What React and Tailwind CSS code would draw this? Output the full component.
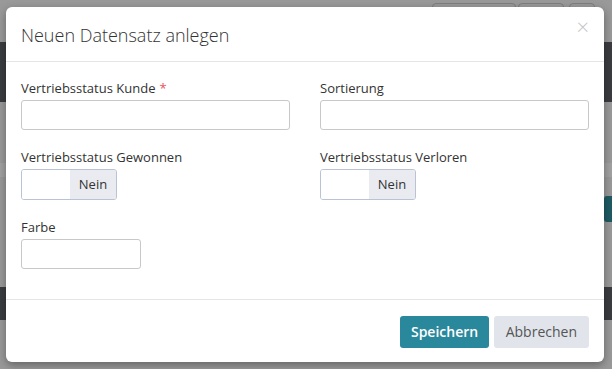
import { useState } from "react";

const font = { fontFamily: '"Open Sans", "Liberation Sans", sans-serif' };

function Field({ label, required, className = "w-full" }) {
  return (
    <div className="flex flex-col">
      <label className="text-[13px] leading-[18px] text-[#333] mb-[3px]">
        {label}
        {required && <span className="text-[#e8525c] ml-1">*</span>}
      </label>
      <input
        type="text"
        className={`h-[30px] rounded-[3px] border border-[#c8c8c8] bg-white outline-none ${className}`}
      />
    </div>
  );
}

function Toggle({ label }) {
  const [on, setOn] = useState(false);
  return (
    <div className="flex flex-col">
      <label className="text-[13px] leading-[18px] text-[#333] mb-[3px]">{label}</label>
      <button
        type="button"
        onClick={() => setOn(!on)}
        className="flex h-[31px] w-[96px] rounded-[3px] border border-[#b9c3d3] overflow-hidden bg-white"
      >
        <span className="w-[48px] h-full bg-white" />
        <span className="flex-1 h-full bg-[#e9ebf0] flex items-center justify-center text-[13px] text-[#333]">
          {on ? "Ja" : "Nein"}
        </span>
      </button>
    </div>
  );
}

export default function App() {
  return (
    <div className="relative w-[612px] h-[369px] overflow-hidden bg-[#999]" style={font}>
      {/* page behind the overlay */}
      <div className="flex flex-col h-full">
        <div className="h-[42px] relative">
          <div className="absolute left-[432px] top-[3px] w-[84px] h-[10px] rounded-[4px] border border-[#7e7e7e]" />
          <div className="absolute left-[518px] top-[3px] w-[46px] h-[10px] rounded-[4px] border border-[#7e7e7e]" />
          <div className="absolute left-[569px] top-[3px] w-[26px] h-[10px] rounded-[4px] border border-[#7e7e7e]" />
        </div>
        <div className="h-[60px] bg-[#3a3c3f]" />
        <div className="h-[61px]" />
        <div className="h-[14px] bg-[#a1a1a1]" />
        <div className="h-[19px]" />
        <div className="h-[26px] flex justify-end">
          <div className="w-[8px] h-full bg-[#1f5a63] rounded-l-[3px]" />
        </div>
        <div className="h-[65px]" />
        <div className="h-[33px] bg-[#3a3c3f]" />
        <div className="flex-1" />
      </div>

      {/* modal */}
      <div className="absolute left-[6px] top-[7px] w-[598px] h-[355px] bg-white rounded-[6px] shadow-[0_3px_9px_rgba(0,0,0,0.35)] flex flex-col">
        <div className="h-[55px] flex items-center justify-between pl-[15px] pr-[15px] border-b border-[#e5e5e5]">
          <h4 className="text-[18px] font-light text-[#333] pt-[2px]">Neuen Datensatz anlegen</h4>
          <span className="text-[#c4c4c4] text-[22px] leading-none -mt-[16px] font-light">×</span>
        </div>
        <div className="flex-1 px-[15px] pt-[17px] border-b border-[#e5e5e5]">
          <div className="grid grid-cols-2 gap-x-[30px] gap-y-[18px]">
            <Field label="Vertriebsstatus Kunde" required />
            <Field label="Sortierung" />
            <Toggle label="Vertriebsstatus Gewonnen" />
            <Toggle label="Vertriebsstatus Verloren" />
            <Field label="Farbe" className="w-[120px]" />
          </div>
        </div>
        <div className="h-[62px] flex items-center justify-end gap-[5px] pr-[15px] pt-[1px]">
          <button className="h-[32px] px-[10.5px] rounded-[3px] bg-[#2a889c] text-white text-[14px] font-semibold">
            Speichern
          </button>
          <button className="h-[32px] px-[12px] rounded-[3px] bg-[#e1e5eb] text-[#555] text-[14px]">
            Abbrechen
          </button>
        </div>
      </div>
    </div>
  );
}
